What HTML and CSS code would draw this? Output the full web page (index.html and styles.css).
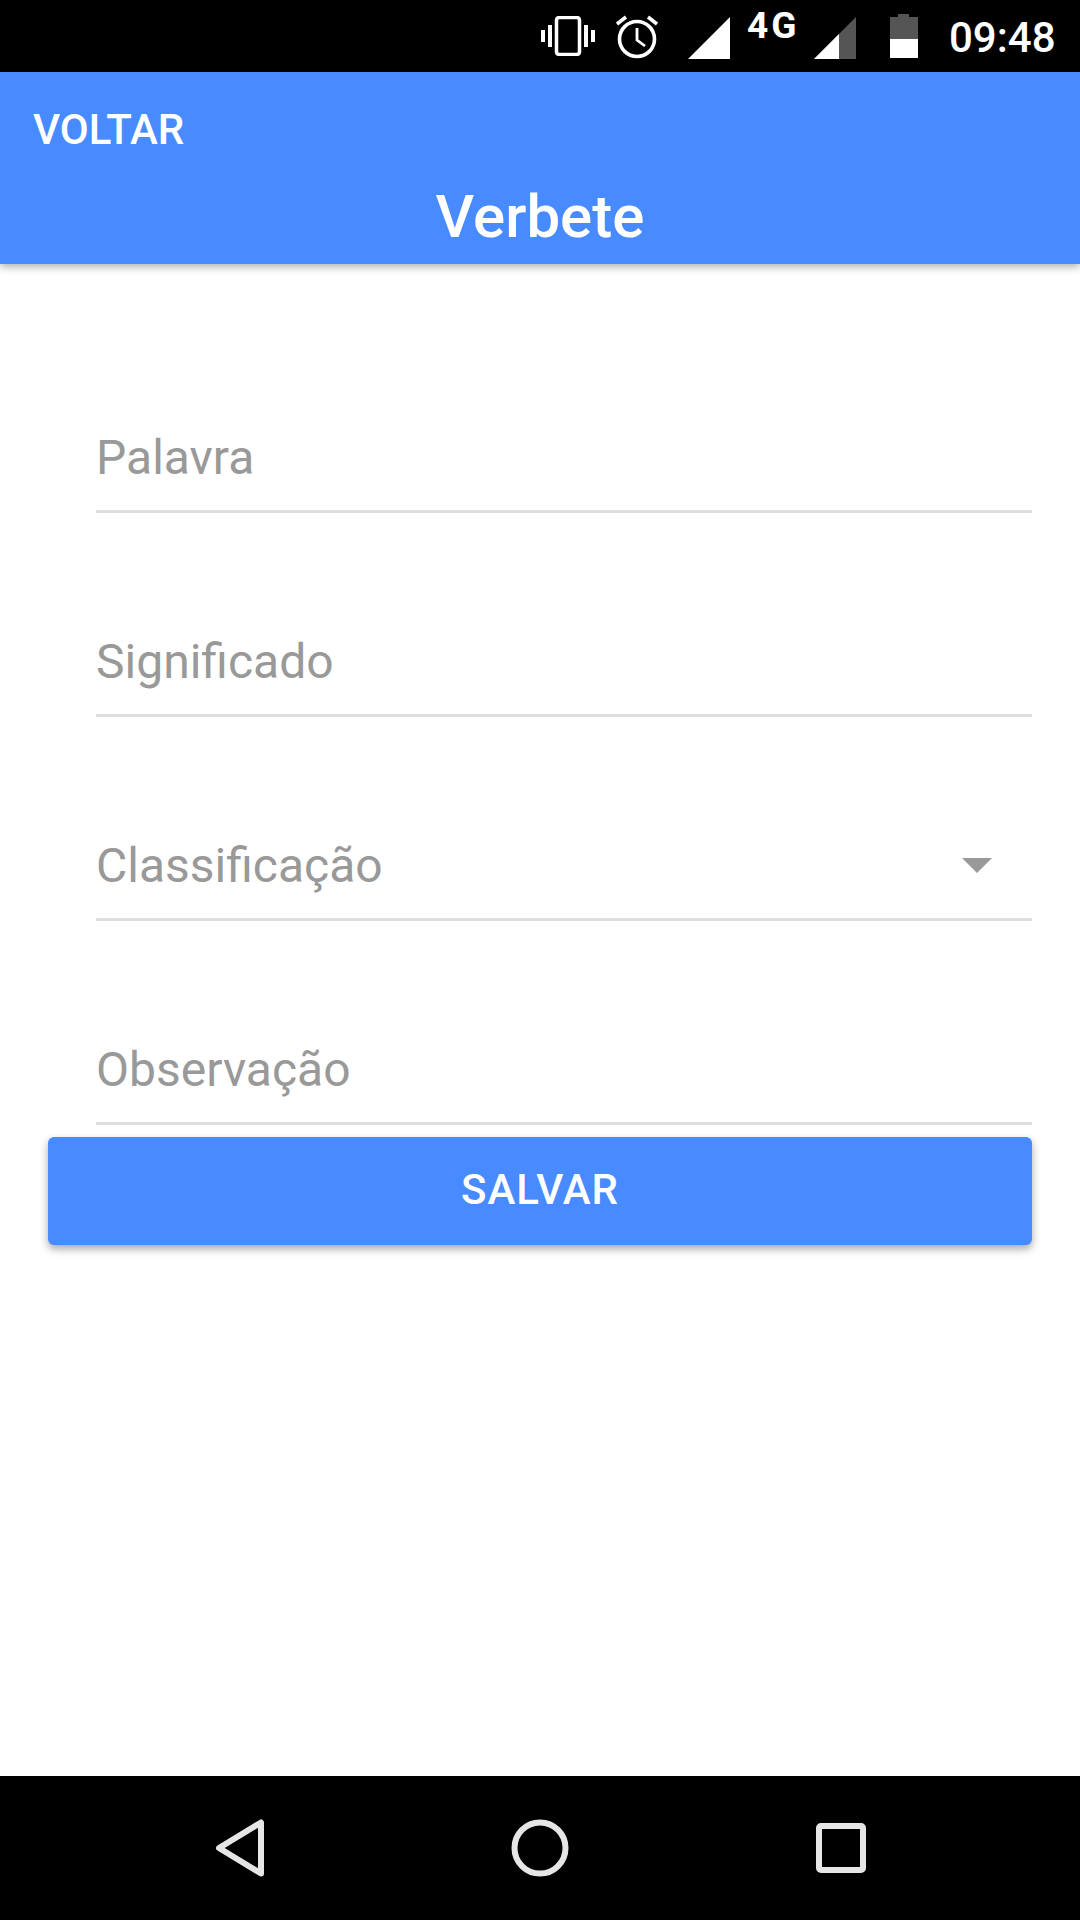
FILE: index.html
```html
<!DOCTYPE html>
<html lang="en">
<head>
    <meta charset="UTF-8">
    <meta name="viewport" content="width=device-width, initial-scale=1.0">
    <title>Verbete</title>
    <link rel="stylesheet" href="styles.css">
</head>
<body>
    <div class="app">
        <!-- Status bar -->
        <div class="status-bar">
            <svg class="ic-vibrate" width="54" height="40" viewBox="0 0 54 40">
                <rect x="15.5" y="1.5" width="23" height="37" rx="2.5" fill="none" stroke="#fff" stroke-width="3.5"/>
                <path d="M0 14h4v12H0zM7 9h4v22H7zM43 9h4v22h-4zM50 14h4v12h-4z" fill="#fff"/>
            </svg>
            <svg class="ic-alarm" width="42" height="44" viewBox="0 0 42 44">
                <circle cx="21" cy="24" r="17.5" fill="none" stroke="#fff" stroke-width="3.6"/>
                <path d="M21 13v12l8 6" fill="none" stroke="#fff" stroke-width="2.8"/>
                <path d="M1 9 10 2M41 9 32 2" fill="none" stroke="#fff" stroke-width="3.6"/>
            </svg>
            <svg class="ic-signal" width="42" height="42" viewBox="0 0 42 42">
                <path d="M0 42 42 0v42z" fill="#fff"/>
            </svg>
            <span class="net-type">4G</span>
            <svg class="ic-signal-low" width="42" height="42" viewBox="0 0 42 42">
                <path d="M0 42 42 0v42z" fill="#555"/>
                <path d="M0 42 25 17v25z" fill="#fff"/>
            </svg>
            <svg class="ic-battery" width="28" height="44" viewBox="0 0 28 44">
                <path d="M8 0h11v3h9v22H0V3h8z" fill="#555"/>
                <rect y="25" width="28" height="19" fill="#fff"/>
            </svg>
            <span class="clock">09:48</span>
        </div>

        <!-- Header -->
        <header class="toolbar">
            <button class="back-btn">VOLTAR</button>
            <h1 class="toolbar-title">Verbete</h1>
        </header>

        <!-- Form -->
        <main class="content">
            <div class="field"><span class="placeholder">Palavra</span></div>
            <div class="field"><span class="placeholder">Significado</span></div>
            <div class="field">
                <span class="placeholder">Classificação</span>
                <span class="caret"></span>
            </div>
            <div class="field"><span class="placeholder">Observação</span></div>
            <button class="save-btn">SALVAR</button>
        </main>

        <!-- Navigation bar -->
        <nav class="nav-bar">
            <svg width="50" height="58" viewBox="0 0 50 58">
                <path d="M47 3.5v51L5 29z" fill="none" stroke="#e6e6e6" stroke-width="6" stroke-linejoin="round"/>
            </svg>
            <svg width="58" height="58" viewBox="0 0 58 58">
                <circle cx="29" cy="29" r="25.5" fill="none" stroke="#e6e6e6" stroke-width="6"/>
            </svg>
            <svg width="50" height="50" viewBox="0 0 50 50">
                <rect x="3" y="3" width="44" height="44" rx="2" fill="none" stroke="#e6e6e6" stroke-width="6"/>
            </svg>
        </nav>
    </div>
</body>
</html>
```

FILE: styles.css
```css
* {
    margin: 0;
    padding: 0;
    box-sizing: border-box;
    font-family: Roboto, "Noto Sans", sans-serif;
}

body {
    background: #fff;
}

.app {
    height: 1920px;
    display: flex;
    flex-direction: column;
    overflow: hidden;
}

.status-bar {
    height: 72px;
    background: #000;
    color: #fff;
    display: flex;
    align-items: center;
    padding-left: 541px;
}

.ic-alarm {
    margin-left: 21px;
    margin-top: 1px;
}

.ic-signal {
    margin-left: 30px;
    margin-top: 4px;
}

.net-type {
    margin-left: 17px;
    width: 51px;
    font-size: 37px;
    font-weight: 700;
    letter-spacing: 3px;
    line-height: 36px;
    white-space: nowrap;
    align-self: flex-start;
    margin-top: 8px;
}

.ic-signal-low {
    margin-left: 16px;
    margin-top: 4px;
}

.ic-battery {
    margin-left: 34px;
}

.clock {
    margin-left: 31px;
    font-size: 42px;
    font-weight: 500;
    line-height: 46px;
    margin-top: 4px;
}

.toolbar {
    height: 192px;
    background: #488aff;
    color: #fff;
    box-shadow: 0 3px 8px rgba(0, 0, 0, 0.3);
    position: relative;
}

.back-btn {
    display: block;
    background: none;
    border: none;
    color: #fff;
    font-size: 42px;
    font-weight: 500;
    line-height: 48px;
    margin: 34px 0 0 33px;
}

.toolbar-title {
    color: #fff;
    font-size: 60px;
    font-weight: 500;
    line-height: 66px;
    text-align: center;
    margin-top: 30px;
}

.content {
    flex: 1;
    padding: 45px 48px 0;
}

.field {
    height: 204px;
    margin-left: 48px;
    border-bottom: 3px solid #dedede;
    display: flex;
    align-items: flex-end;
    justify-content: space-between;
    padding: 0 40px 21px 0;
}

.placeholder {
    color: #999;
    font-size: 48px;
    line-height: 62px;
}

.caret {
    width: 0;
    height: 0;
    border-left: 15px solid transparent;
    border-right: 15px solid transparent;
    border-top: 15px solid #999;
    margin-bottom: 24px;
}

.save-btn {
    display: block;
    width: 100%;
    height: 108px;
    margin-top: 12px;
    padding-bottom: 4px;
    background: #488aff;
    color: #fff;
    border: none;
    border-radius: 6px;
    font-size: 42px;
    font-weight: 500;
    letter-spacing: 1px;
    box-shadow: 0 4px 8px rgba(0, 0, 0, 0.35);
}

.nav-bar {
    height: 144px;
    background: #000;
    display: flex;
    align-items: center;
    padding-left: 214px;
    gap: 247px;
}
```
